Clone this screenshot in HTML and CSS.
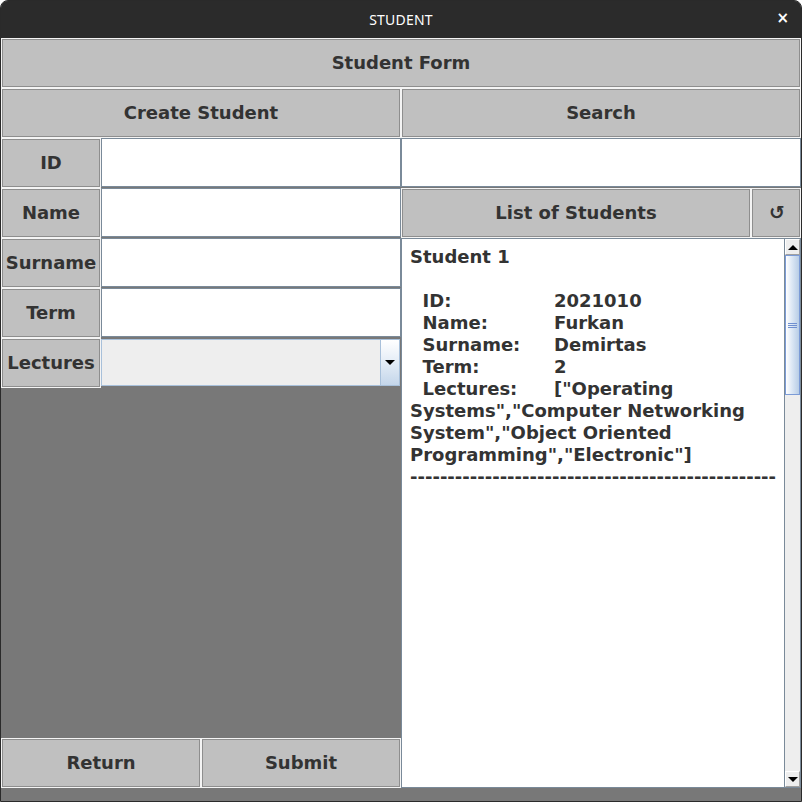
FILE: index.html
```html
<!DOCTYPE html>
<html>
<head>
<meta charset="utf-8">
<link rel="stylesheet" href="styles.css">
</head>
<body>
<div class="window">
  <div class="titlebar">
    <span class="title">STUDENT</span>
    <span class="close">×</span>
  </div>
  <div class="grid">
    <div class="btn c-full">Student Form</div>
    <div class="btn c-left">Create Student</div>
    <div class="btn c-right r2">Search</div>

    <div class="btn c-label r3">ID</div>
    <div class="field c-field r3"></div>
    <div class="field c-right r3"></div>

    <div class="btn c-label r4">Name</div>
    <div class="field c-field r4"></div>
    <div class="btn c-list r4">List of Students</div>
    <div class="btn c-refresh r4"><span class="refresh">↺</span></div>

    <div class="btn c-label r5">Surname</div>
    <div class="field c-field r5"></div>

    <div class="btn c-label r6">Term</div>
    <div class="field c-field r6"></div>

    <div class="btn c-label r7">Lectures</div>
    <div class="combo c-field r7">
      <div class="combo-value"></div>
      <div class="combo-arrow"><span class="tri-down"></span></div>
    </div>

    <div class="scrollpane c-right rtext">
      <div class="text">
        <div class="line">Student 1</div>
        <div class="line">&nbsp;</div>
        <div class="line"><span class="k">  ID:</span>2021010</div>
        <div class="line"><span class="k">  Name:</span>Furkan</div>
        <div class="line"><span class="k">  Surname:</span>Demirtas</div>
        <div class="line"><span class="k">  Term:</span>2</div>
        <div class="line"><span class="k">  Lectures:</span>["Operating</div>
        <div class="line">Systems","Computer Networking</div>
        <div class="line">System","Object Oriented</div>
        <div class="line">Programming","Electronic"]</div>
        <div class="line">-------------------------------------------------</div>
      </div>
      <div class="vscroll">
        <div class="sb-btn"><span class="tri-up"></span></div>
        <div class="thumb"><span class="grip"></span></div>
        <div class="track"></div>
        <div class="sb-btn"><span class="tri-down"></span></div>
      </div>
    </div>

    <div class="btn c-ret r15">Return</div>
    <div class="btn c-sub r15">Submit</div>
  </div>
</div>
</body>
</html>
```

FILE: styles.css
```css
html, body {
  margin: 0;
  padding: 0;
  background: #ffffff;
}

.window {
  width: 802px;
  height: 802px;
  box-sizing: border-box;
  border: 1px solid #2a2a2a;
  border-radius: 8px 8px 0 0;
  overflow: hidden;
  background: #787878;
  display: flex;
  flex-direction: column;
}

.titlebar {
  flex: none;
  height: 37px;
  background: #2b2b2b;
  color: #ffffff;
  display: flex;
  align-items: center;
  justify-content: center;
  position: relative;
  font-family: "Noto Sans", "DejaVu Sans", sans-serif;
  font-size: 14px;
}

.title {
  letter-spacing: 0.2px;
}

.close {
  position: absolute;
  right: 12px;
  top: 8px;
  font-family: "DejaVu Sans", sans-serif;
  font-weight: bold;
  font-size: 15px;
}

.grid {
  display: grid;
  grid-template-columns: repeat(16, 50px);
  grid-template-rows: repeat(15, 50px);
  font-family: "DejaVu Sans", sans-serif;
  font-weight: bold;
  font-size: 18px;
  color: #333333;
}

.btn {
  box-sizing: border-box;
  background: #c0c0c0;
  border: 1px solid #f4f4f4;
  box-shadow: inset 0 0 0 1px #8e8e8e;
  display: flex;
  align-items: center;
  justify-content: center;
  white-space: nowrap;
  padding-bottom: 2px;
}

.field {
  box-sizing: border-box;
  background: #ffffff;
  border: 1px solid #7a8a99;
  box-shadow: inset -1px -1px 0 #ffffff;
  margin: 0 0 1px 0;
}

.c-full { grid-column: 1 / 17; grid-row: 1; }
.c-left { grid-column: 1 / 9; grid-row: 2; }
.c-right { grid-column: 9 / 17; }
.c-label { grid-column: 1 / 3; }
.c-field { grid-column: 3 / 9; }
.c-list { grid-column: 9 / 16; }
.c-refresh { grid-column: 16 / 17; }
.c-ret { grid-column: 1 / 5; }
.c-sub { grid-column: 5 / 9; }

.r2 { grid-row: 2; }
.r3 { grid-row: 3; }
.r4 { grid-row: 4; }
.r5 { grid-row: 5; }
.r6 { grid-row: 6; }
.r7 { grid-row: 7; }
.r15 { grid-row: 15; }
.rtext { grid-row: 5 / 16; }

.refresh {
  font-size: 19px;
  margin-left: 2px;
}

.combo {
  box-sizing: border-box;
  margin: 1px 1px 2px 0;
  border: 1px solid #a8c0da;
  background: #eeeeee;
  display: flex;
}

.combo-value {
  flex: 1;
}

.combo-arrow {
  width: 18px;
  border-left: 1px solid #a8c0da;
  background: linear-gradient(to bottom, #ffffff 0%, #e6eef7 45%, #c4d6ea 100%);
  display: flex;
  align-items: center;
  justify-content: center;
}

.tri-down {
  width: 0;
  height: 0;
  border-left: 5px solid transparent;
  border-right: 5px solid transparent;
  border-top: 5px solid #000000;
}

.tri-up {
  width: 0;
  height: 0;
  border-left: 5px solid transparent;
  border-right: 5px solid transparent;
  border-bottom: 5px solid #000000;
}

.scrollpane {
  box-sizing: border-box;
  background: #ffffff;
  border: 1px solid #7a8a99;
  display: flex;
  min-height: 0;
}

.text {
  flex: 1;
  padding: 7px 0 0 8px;
  line-height: 22px;
  font-size: 18px;
  color: #333333;
  overflow: hidden;
}

.line {
  white-space: pre;
  height: 22px;
}

.k {
  display: inline-block;
  width: 144px;
  white-space: pre;
}

.vscroll {
  flex: none;
  width: 15px;
  border-left: 1px solid #7a8a99;
  background: #eeeeee;
  display: flex;
  flex-direction: column;
}

.sb-btn {
  flex: none;
  height: 16px;
  box-sizing: border-box;
  background: #eeeeee;
  border: 1px solid #ffffff;
  border-right-color: #a0a0a0;
  border-bottom-color: #a0a0a0;
  display: flex;
  align-items: center;
  justify-content: center;
}

.thumb {
  flex: none;
  height: 140px;
  box-sizing: border-box;
  border: 1px solid #7b9bd6;
  background: linear-gradient(to right, #ffffff 0%, #dde8f5 45%, #b8cde6 100%);
  display: flex;
  align-items: center;
  justify-content: center;
}

.grip {
  width: 9px;
  height: 5px;
  border-top: 1px solid #6f8fd0;
  border-bottom: 1px solid #6f8fd0;
  box-sizing: border-box;
  background: linear-gradient(to bottom, transparent 40%, #6f8fd0 40%, #6f8fd0 60%, transparent 60%);
}

.track {
  flex: 1;
  background: #eeeeee;
}
```
